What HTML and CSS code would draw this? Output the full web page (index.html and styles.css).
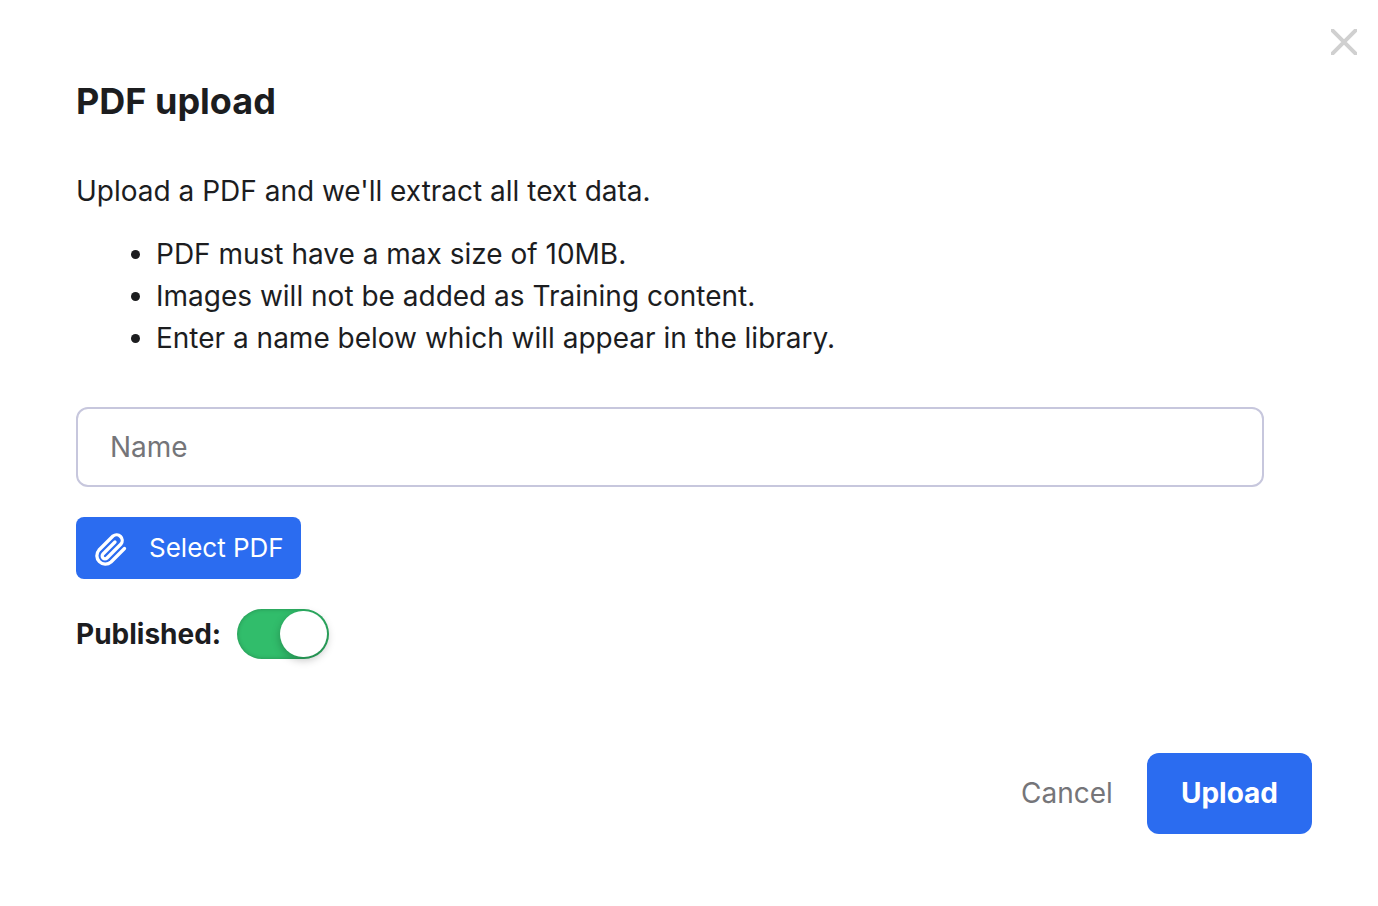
FILE: index.html
```html
<!DOCTYPE html>
<html lang="en">
<head>
    <meta charset="UTF-8">
    <title>PDF upload</title>
    <link rel="stylesheet" href="styles.css">
</head>
<body>
<form class="modal">
    <button type="button" class="close" aria-label="Close">
        <svg width="26" height="26" viewBox="0 0 26 26" fill="none" stroke="#d0d0d0" stroke-width="4">
            <path d="M-1 -1L27 27M27 -1L-1 27"/>
        </svg>
    </button>

    <h1>PDF upload</h1>
    <p>Upload a PDF and we'll extract all text data.</p>
    <ul>
        <li>PDF must have a max size of 10MB.</li>
        <li>Images will not be added as Training content.</li>
        <li>Enter a name below which will appear in the library.</li>
    </ul>

    <input type="text" class="name_input" name="name" placeholder="Name" aria-label="Name">

    <button type="button" class="select_button">
        <svg width="36" height="40" viewBox="0 -4 36 40" fill="none" stroke="#ffffff" stroke-width="3.3" stroke-linecap="round" stroke-linejoin="round">
            <path d="M31.5 17.5L18 31A8.5 8.5 0 0 1 6 19L20 5A5.7 5.7 0 0 1 28 13L14 27A2.8 2.8 0 0 1 10 23L22 11"/>
        </svg>
        Select PDF
    </button>

    <div class="published">
        <label for="published">Published:</label>
        <input type="checkbox" role="switch" id="published" class="switch" checked>
    </div>

    <div class="actions">
        <button type="button" class="cancel_button">Cancel</button>
        <button type="submit" class="upload_button">Upload</button>
    </div>
</form>
</body>
</html>
```

FILE: styles.css
```css
* {
    box-sizing: border-box;
}

body {
    margin: 0;
    background-color: #ffffff;
    color: #1c1d1f;
    font-family: Inter, Arial, sans-serif;
    font-size: 28px;
    line-height: 42px;
}

button, input {
    font-family: inherit;
    font-size: inherit;
    margin: 0;
}

button {
    border: none;
    padding: 0;
    cursor: pointer;
}

.modal {
    position: relative;
    padding: 76px 66px 72px 76px;
}

.close {
    position: absolute;
    top: 29px;
    right: 21px;
    background: none;
    line-height: 0;
}

h1 {
    margin: 0 0 44px;
    font-size: 36px;
    line-height: 50px;
    font-weight: 700;
}

p {
    margin: 0 0 21px;
}

ul {
    margin: 0 0 48px;
    padding-left: 80px;
}

.name_input {
    display: block;
    width: calc(100% - 48px);
    height: 80px;
    padding: 0 32px;
    border: 2px solid #c7c7dd;
    border-radius: 12px;
    margin-bottom: 30px;
    color: inherit;
}

.name_input::placeholder {
    color: #757579;
}

.select_button {
    display: flex;
    align-items: center;
    gap: 20px;
    height: 62px;
    padding: 0 17px 2px;
    border-radius: 8px;
    margin-bottom: 30px;
    background-color: #2b6cf0;
    color: #ffffff;
    font-size: 26px;
}

.published {
    display: flex;
    align-items: center;
    gap: 16px;
    margin-bottom: 94px;
    font-weight: 700;
}

.switch {
    appearance: none;
    width: 92px;
    height: 50px;
    padding: 2px;
    border-radius: 25px;
    background-color: #31bd6b;
    box-shadow: inset 0 0 4px rgba(0, 0, 0, 0.25);
    cursor: pointer;
}

.switch::before {
    content: "";
    display: block;
    width: 47px;
    height: 46px;
    border-radius: 23px;
    background-color: #ffffff;
    box-shadow: 0 3px 8px rgba(0, 0, 0, 0.25);
}

.switch:checked::before {
    margin-left: auto;
}

.actions {
    display: flex;
    justify-content: flex-end;
    gap: 34px;
}

.cancel_button {
    padding-bottom: 2px;
    background: none;
    color: #757579;
}

.upload_button {
    height: 81px;
    padding: 0 34px 2px;
    border-radius: 12px;
    background-color: #2b6cf0;
    color: #ffffff;
    font-weight: 700;
}
```
